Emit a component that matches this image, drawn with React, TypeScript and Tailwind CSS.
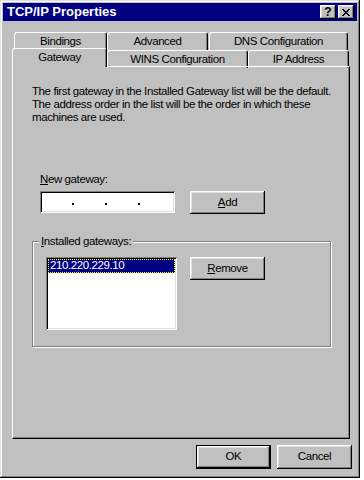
import React from "react";

const raised =
  "bg-[#c0c0c0] shadow-[inset_-1px_-1px_0_#000,inset_1px_1px_0_#fff,inset_-2px_-2px_0_#808080,inset_2px_2px_0_#dfdfdf]";
const sunken =
  "shadow-[inset_1px_1px_0_#808080,inset_-1px_-1px_0_#fff,inset_2px_2px_0_#000,inset_-2px_-2px_0_#dfdfdf]";

function Tab({ w, label, selected = false, ml = 0 }: { w: number; label: string; selected?: boolean; ml?: number }) {
  return (
    <div
      style={{ width: w, marginLeft: ml }}
      className={
        "bg-[#c0c0c0] border-t border-l border-white border-r border-r-black rounded-tl-[3px] rounded-tr-[3px] shadow-[inset_-1px_0_0_#808080] flex justify-center " +
        (selected ? "relative z-10 -mt-[2px] h-[19px] pt-[1px]" : "h-[18px] pt-[1px]")
      }
    >
      <span className="leading-[14px]">{label}</span>
    </div>
  );
}

export default function App() {
  return (
    <div
      className="w-[364px] h-[480px] bg-white text-black text-[11.5px] tracking-[-0.4px]"
      style={{ fontFamily: '"Liberation Sans", Arial, sans-serif' }}
    >
      <div className="w-[360px] h-[478px] bg-[#c0c0c0] p-[3px] flex flex-col shadow-[inset_-1px_-1px_0_#000,inset_1px_1px_0_#dfdfdf,inset_-2px_-2px_0_#808080,inset_2px_2px_0_#fff]">
        {/* Title bar */}
        <div className="h-[18px] bg-[#000080] flex items-center pl-[4px] pr-[3px]">
          <span className="text-white font-bold text-[13px] leading-[16px] tracking-normal">TCP/IP Properties</span>
          <div className="ml-auto flex gap-[2px]">
            <div className={raised + " w-[16px] h-[14px] flex items-center justify-center"}>
              <span className="font-bold text-[12px] leading-[12px] text-black tracking-normal">?</span>
            </div>
            <div className={raised + " w-[16px] h-[14px] flex items-center justify-center"}>
              <svg width="8" height="7" viewBox="0 0 8 7" shapeRendering="crispEdges">
                <path d="M0 0h2v1h-2zM6 0h2v1h-2zM1 1h2v1h-2zM5 1h2v1h-2zM2 2h4v1h-4zM3 3h2v1h-2zM2 4h4v1h-4zM1 5h2v1h-2zM5 5h2v1h-2zM0 6h2v1h-2zM6 6h2v1h-2z" fill="#000" />
              </svg>
            </div>
          </div>
        </div>

        {/* Tabs */}
        <div className="pl-[9px] pt-[11px] flex flex-col">
          <div className="flex h-[18px]">
            <Tab w={93} label="Bindings" ml={2} />
            <Tab w={101} label="Advanced" ml={0} />
            <Tab w={139} label="DNS Configuration" ml={1} />
          </div>
          <div className="flex h-[16px] items-start">
            <Tab w={95} label="Gateway" selected />
            <Tab w={141} label="WINS Configuration" />
            <Tab w={101} label="IP Address" />
          </div>

          {/* Panel */}
          <div className="w-[338px] h-[373px] border-t border-l border-white border-r border-b border-r-black border-b-black shadow-[inset_-1px_-1px_0_#808080] pl-[19px] pt-[18px] flex flex-col">
            <p className="leading-[13px] whitespace-nowrap">
              The first gateway in the Installed Gateway list will be the default.
              <br />
              The address order in the list will be the order in which these
              <br />
              machines are used.
            </p>

            <div className="pl-[8px] mt-[49px] flex flex-col">
              <span className="leading-[13px]">
                <span className="underline underline-offset-[1px]">N</span>ew gateway:
              </span>
              <div className="flex items-start mt-[5px]">
                <div className={sunken + " bg-white w-[135px] h-[22px] relative"}>
                  <span className="absolute left-[32px] top-[12px] w-[2px] h-[2px] bg-black" />
                  <span className="absolute left-[65px] top-[12px] w-[2px] h-[2px] bg-black" />
                  <span className="absolute left-[98px] top-[12px] w-[2px] h-[2px] bg-black" />
                </div>
                <div className={raised + " ml-[15px] w-[75px] h-[23px] flex items-center justify-center"}>
                  <span>
                    <span className="underline underline-offset-[1px]">A</span>dd
                  </span>
                </div>
              </div>
            </div>

            {/* Group box */}
            <div className="mt-[27px] w-[299px] h-[106px] relative border border-[#808080] shadow-[inset_1px_1px_0_#fff,1px_1px_0_#fff] pl-[13px] pt-[15px] flex items-start">
              <span className="absolute left-[6px] -top-[8px] bg-[#c0c0c0] px-[2px] leading-[14px]">
                <span className="underline underline-offset-[1px]">I</span>nstalled gateways:
              </span>
              <div className={sunken + " bg-white w-[131px] h-[73px] p-[2px]"}>
                <div className="bg-[#000080] text-white h-[14px] leading-[13px] pl-[2px] outline outline-1 outline-dotted outline-[#ffff00] -outline-offset-1">
                  210.220.229.10
                </div>
              </div>
              <div className={raised + " ml-[13px] w-[75px] h-[23px] flex items-center justify-center"}>
                <span>
                  <span className="underline underline-offset-[1px]">R</span>emove
                </span>
              </div>
            </div>
          </div>
        </div>

        {/* Bottom buttons */}
        <div className="flex justify-end gap-[6px] pr-[5px] mt-[6px]">
          <div className="w-[75px] h-[24px] border border-black">
            <div className={raised + " w-full h-full flex items-center justify-center"}>OK</div>
          </div>
          <div className={raised + " w-[75px] h-[24px] flex items-center justify-center"}>Cancel</div>
        </div>
      </div>
    </div>
  );
}
